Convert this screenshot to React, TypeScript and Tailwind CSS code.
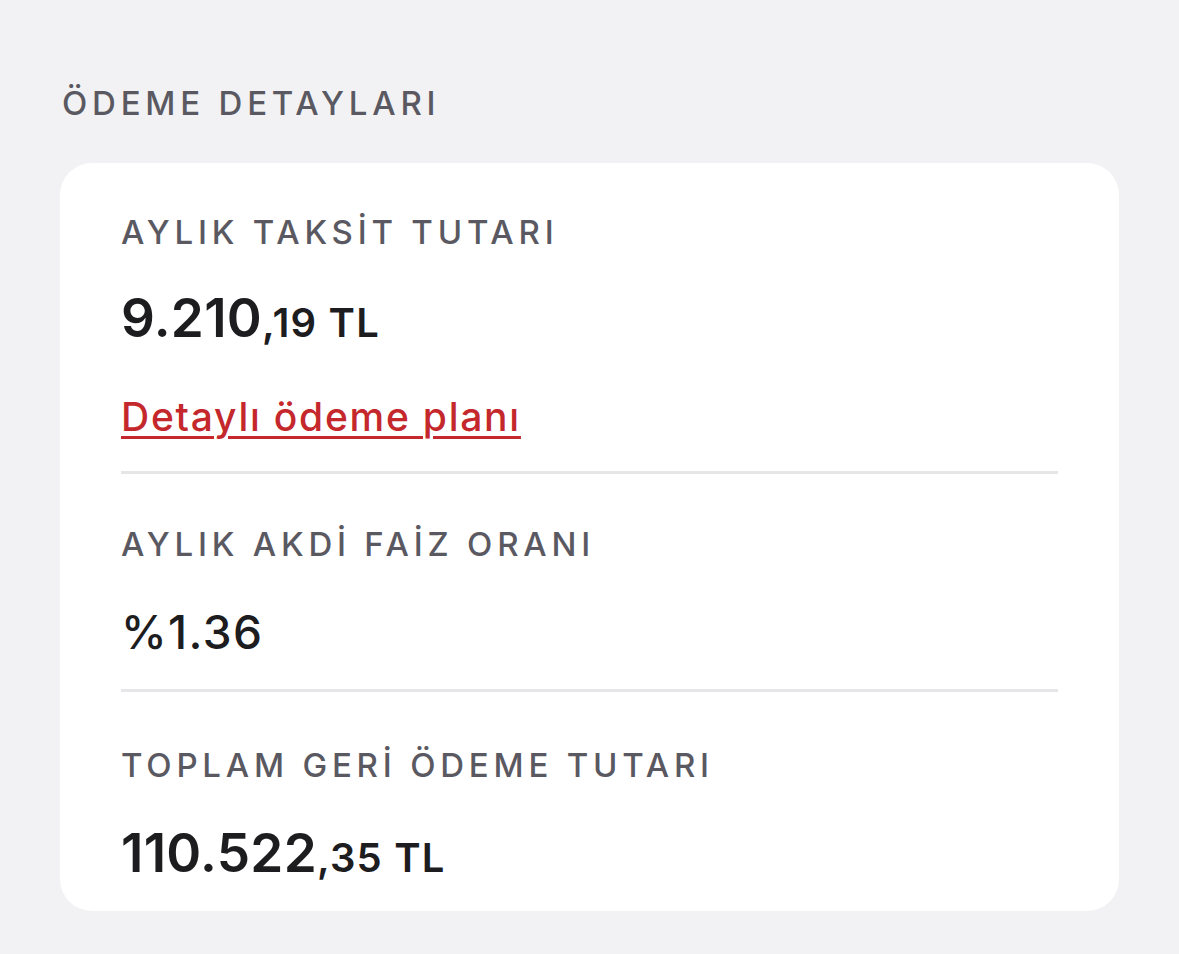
export default function App() {
  const label =
    "text-[33px] leading-[40px] font-medium tracking-[0.145em] text-[#5a5962]";
  const value =
    "text-[53px] leading-[64px] font-semibold tracking-[0.005em] text-[#1d1d1f]";
  const small = "text-[40px] tracking-[0.03em]";
  return (
    <div
      className="min-h-[954px] w-full bg-[#f2f2f4] pl-[60px] pr-[60px] pt-[83px]"
      style={{ fontFamily: '"Inter", "Noto Sans", sans-serif' }}
    >
      <h2 className="pl-[2px] text-[33px] leading-[40px] font-medium tracking-[0.145em] text-[#5a5962]">
        ÖDEME DETAYLARI
      </h2>
      <div className="mt-[40px] flex flex-col rounded-[32px] bg-white px-[61px] pt-[49px] pb-[21px]">
        <div className={label}>AYLIK TAKSİT TUTARI</div>
        <div className={`mt-[34px] ${value}`}>
          9.210<span className={small}>,19 TL</span>
        </div>
        <a
          href="#"
          className="mt-[38px] self-start text-[39px] leading-[48px] font-medium tracking-[0.045em] text-[#c4282c] underline decoration-[3px] underline-offset-[5px]"
        >
          Detaylı ödeme planı
        </a>
        <div className="mt-[30px] h-[3px] bg-[#e6e6e8]" />
        <div className={`mt-[50px] ${label}`}>AYLIK AKDİ FAİZ ORANI</div>
        <div className="mt-[40px] text-[46px] leading-[56px] font-medium tracking-[0.03em] text-[#1d1d1f]">
          %1.36
        </div>
        <div className="mt-[29px] h-[3px] bg-[#e6e6e8]" />
        <div className={`mt-[53px] ${label}`}>TOPLAM GERİ ÖDEME TUTARI</div>
        <div className={`mt-[36px] ${value}`}>
          110.522<span className={small}>,35 TL</span>
        </div>
      </div>
    </div>
  );
}
